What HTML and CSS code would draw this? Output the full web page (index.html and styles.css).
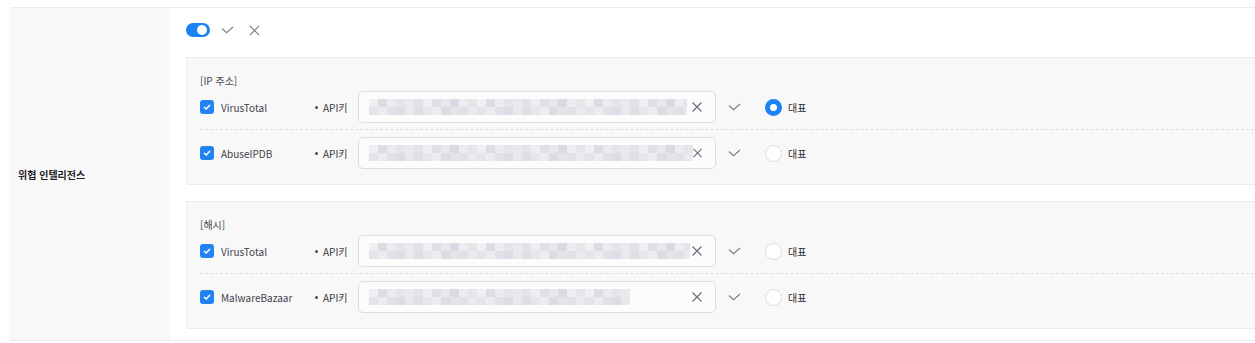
FILE: index.html
```html
<!DOCTYPE html>
<html lang="ko">
<head>
<meta charset="utf-8">
<title>위협 인텔리전스</title>
<link rel="stylesheet" href="styles.css">
</head>
<body>
<div class="form-row">
  <div class="row-label">위협 인텔리전스</div>
  <div class="row-body">
    <div class="toolbar">
      <span class="toggle"><span class="knob"></span></span>
      <svg class="tb-icon" width="13" height="8" viewBox="0 0 13 8"><path d="M1 2.5 L5.5 6.8 L12 1" fill="none" stroke="#7d8290" stroke-width="1.2"/></svg>
      <svg class="tb-icon" width="11" height="11" viewBox="0 0 11 11"><path d="M1 1 L10 10 M10 1 L1 10" fill="none" stroke="#7d8290" stroke-width="1.2"/></svg>
    </div>

    <div class="group">
      <div class="group-title">[IP 주소]</div>
      <div class="item">
        <span class="checkbox"><svg width="10" height="10" viewBox="0 0 10 10"><path d="M2 5 L4.2 7 L8 3" fill="none" stroke="#fff" stroke-width="1.5"/></svg></span>
        <span class="name">VirusTotal</span>
        <span class="api">API키</span>
        <div class="input"><span class="blur b1"></span><svg class="clear" width="10" height="10" viewBox="0 0 10 10"><path d="M0.5 0.5 L9.5 9.5 M9.5 0.5 L0.5 9.5" fill="none" stroke="#6f7482" stroke-width="1.3"/></svg></div>
        <svg class="ok" width="13" height="8" viewBox="0 0 13 8"><path d="M1 2.5 L5.5 6.8 L12 1" fill="none" stroke="#7d8290" stroke-width="1.2"/></svg>
        <span class="radio on"></span><span class="rep">대표</span>
      </div>
      <div class="item">
        <span class="checkbox"><svg width="10" height="10" viewBox="0 0 10 10"><path d="M2 5 L4.2 7 L8 3" fill="none" stroke="#fff" stroke-width="1.5"/></svg></span>
        <span class="name">AbuseIPDB</span>
        <span class="api">API키</span>
        <div class="input"><span class="blur b2"></span><svg class="clear" width="10" height="10" viewBox="0 0 10 10"><path d="M0.5 0.5 L9.5 9.5 M9.5 0.5 L0.5 9.5" fill="none" stroke="#6f7482" stroke-width="1.3"/></svg></div>
        <svg class="ok" width="13" height="8" viewBox="0 0 13 8"><path d="M1 2.5 L5.5 6.8 L12 1" fill="none" stroke="#7d8290" stroke-width="1.2"/></svg>
        <span class="radio"></span><span class="rep">대표</span>
      </div>
    </div>

    <div class="group">
      <div class="group-title">[해시]</div>
      <div class="item">
        <span class="checkbox"><svg width="10" height="10" viewBox="0 0 10 10"><path d="M2 5 L4.2 7 L8 3" fill="none" stroke="#fff" stroke-width="1.5"/></svg></span>
        <span class="name">VirusTotal</span>
        <span class="api">API키</span>
        <div class="input"><span class="blur b3"></span><svg class="clear" width="10" height="10" viewBox="0 0 10 10"><path d="M0.5 0.5 L9.5 9.5 M9.5 0.5 L0.5 9.5" fill="none" stroke="#6f7482" stroke-width="1.3"/></svg></div>
        <svg class="ok" width="13" height="8" viewBox="0 0 13 8"><path d="M1 2.5 L5.5 6.8 L12 1" fill="none" stroke="#7d8290" stroke-width="1.2"/></svg>
        <span class="radio"></span><span class="rep">대표</span>
      </div>
      <div class="item lav">
        <span class="checkbox"><svg width="10" height="10" viewBox="0 0 10 10"><path d="M2 5 L4.2 7 L8 3" fill="none" stroke="#fff" stroke-width="1.5"/></svg></span>
        <span class="name">MalwareBazaar</span>
        <span class="api">API키</span>
        <div class="input"><span class="blur b4"></span><svg class="clear" width="10" height="10" viewBox="0 0 10 10"><path d="M0.5 0.5 L9.5 9.5 M9.5 0.5 L0.5 9.5" fill="none" stroke="#6f7482" stroke-width="1.3"/></svg></div>
        <svg class="ok" width="13" height="8" viewBox="0 0 13 8"><path d="M1 2.5 L5.5 6.8 L12 1" fill="none" stroke="#7d8290" stroke-width="1.2"/></svg>
        <span class="radio"></span><span class="rep">대표</span>
      </div>
    </div>
  </div>
</div>
</body>
</html>
```
FILE: styles.css
```css
html, body {
  margin: 0;
  padding: 0;
  background: #ffffff;
  overflow: hidden;
}
body {
  font-family: "Noto Sans CJK KR", "Noto Sans", sans-serif;
  font-size: 10px;
  color: #3c3c46;
}
.form-row {
  margin: 7px 0 0 10px;
  display: grid;
  grid-template-columns: 160px 1fr;
  border-top: 1px solid #ececec;
  border-bottom: 1px solid #ececec;
  height: 332px;
}
.row-label {
  background: #f8f8f9;
  display: flex;
  align-items: center;
  padding-left: 8px;
  font-weight: 700;
  color: #1f1f26;
  font-size: 10px;
}
.row-body {
  padding: 15px 0 0 16px;
  display: flex;
  flex-direction: column;
  min-width: 0;
}
.toolbar {
  display: flex;
  align-items: center;
  height: 14px;
}
.toggle {
  width: 24px;
  height: 14px;
  border-radius: 7px;
  background: #1a82f5;
  display: flex;
  align-items: center;
  justify-content: flex-end;
  padding-right: 3px;
  box-sizing: border-box;
  margin-right: 11px;
}
.knob {
  width: 10px;
  height: 10px;
  border-radius: 50%;
  background: #fff;
}
.tb-icon { display: block; }
.tb-icon + .tb-icon { margin-left: 15px; }
.group {
  margin-top: 20px;
  margin-right: -30px;
  border: 1px solid #ebebeb;
  background: #f8f8f8;
  padding: 15px 0 15px 13px;
}
.group + .group { margin-top: 16px; }
.group-title {
  line-height: 16px;
  color: #4a4a52;
  margin-bottom: 2px;
}
.item {
  display: flex;
  align-items: center;
  height: 32px;
}
.item + .item {
  margin-top: 6px;
  padding-top: 7px;
  border-top: 1px dashed #dcdce0;
}
.item.lav { border-top-color: #dcdcf0; }
.checkbox {
  width: 14px;
  height: 14px;
  border-radius: 3px;
  background: #2284f3;
  display: flex;
  align-items: center;
  justify-content: center;
  flex: none;
}
.checkbox svg { display: block; }
.name {
  margin-left: 7px;
  width: 93px;
  color: #42424c;
}
.api {
  width: 44px;
  color: #3a3a44;
  position: relative;
  padding-left: 9px;
  box-sizing: border-box;
}
.api::before {
  content: "";
  position: absolute;
  left: 1px;
  top: 50%;
  width: 3px;
  height: 3px;
  margin-top: -1px;
  border-radius: 50%;
  background: #4a4a55;
}
.input {
  width: 358px;
  height: 32px;
  box-sizing: border-box;
  border: 1px solid #dcdce8;
  border-radius: 5px;
  background: #fcfcfd;
  display: flex;
  align-items: center;
  padding: 0 13px 0 10px;
  flex: none;
}
.blur {
  height: 16px;
  flex: none;
  background:
    repeating-linear-gradient(90deg,
      #f0f0f3 0 9px, #dcdce3 9px 18px, #ececf0 18px 27px, #e4e4ea 27px 36px,
      #eaeaee 36px 45px, #e2e2e8 45px 54px, #eeeef2 54px 63px, #dfdfe6 63px 72px,
      #e8e8ec 72px 81px, #dadae2 81px 90px, #ededf1 90px 99px, #e5e5ea 99px 108px) top / 100% 8px no-repeat,
    repeating-linear-gradient(90deg,
      #e4e4ea 0 9px, #ececf0 9px 18px, #e0e0e7 18px 27px, #dcdce4 27px 36px,
      #e8e8ed 36px 45px, #dedee5 45px 54px, #e6e6eb 54px 63px, #ededf1 63px 72px,
      #dcdce3 72px 81px, #e3e3e9 81px 90px, #e0e0e6 90px 99px, #e9e9ee 99px 108px) bottom / 100% 8px no-repeat;
}
.b1 { width: 318px; }
.b2 { width: 324px; }
.b3 { width: 321px; }
.b4 { width: 261px; }
.clear { margin-left: auto; display: block; }
.ok {
  margin-left: 12px;
  display: block;
  flex: none;
}
.radio {
  margin-left: 24px;
  width: 17px;
  height: 17px;
  box-sizing: border-box;
  border-radius: 50%;
  border: 1px solid #dcdce2;
  background: #fff;
  flex: none;
}
.radio.on {
  border: 5px solid #1a82f5;
}
.rep {
  margin-left: 6px;
  color: #2a2a32;
}
```
